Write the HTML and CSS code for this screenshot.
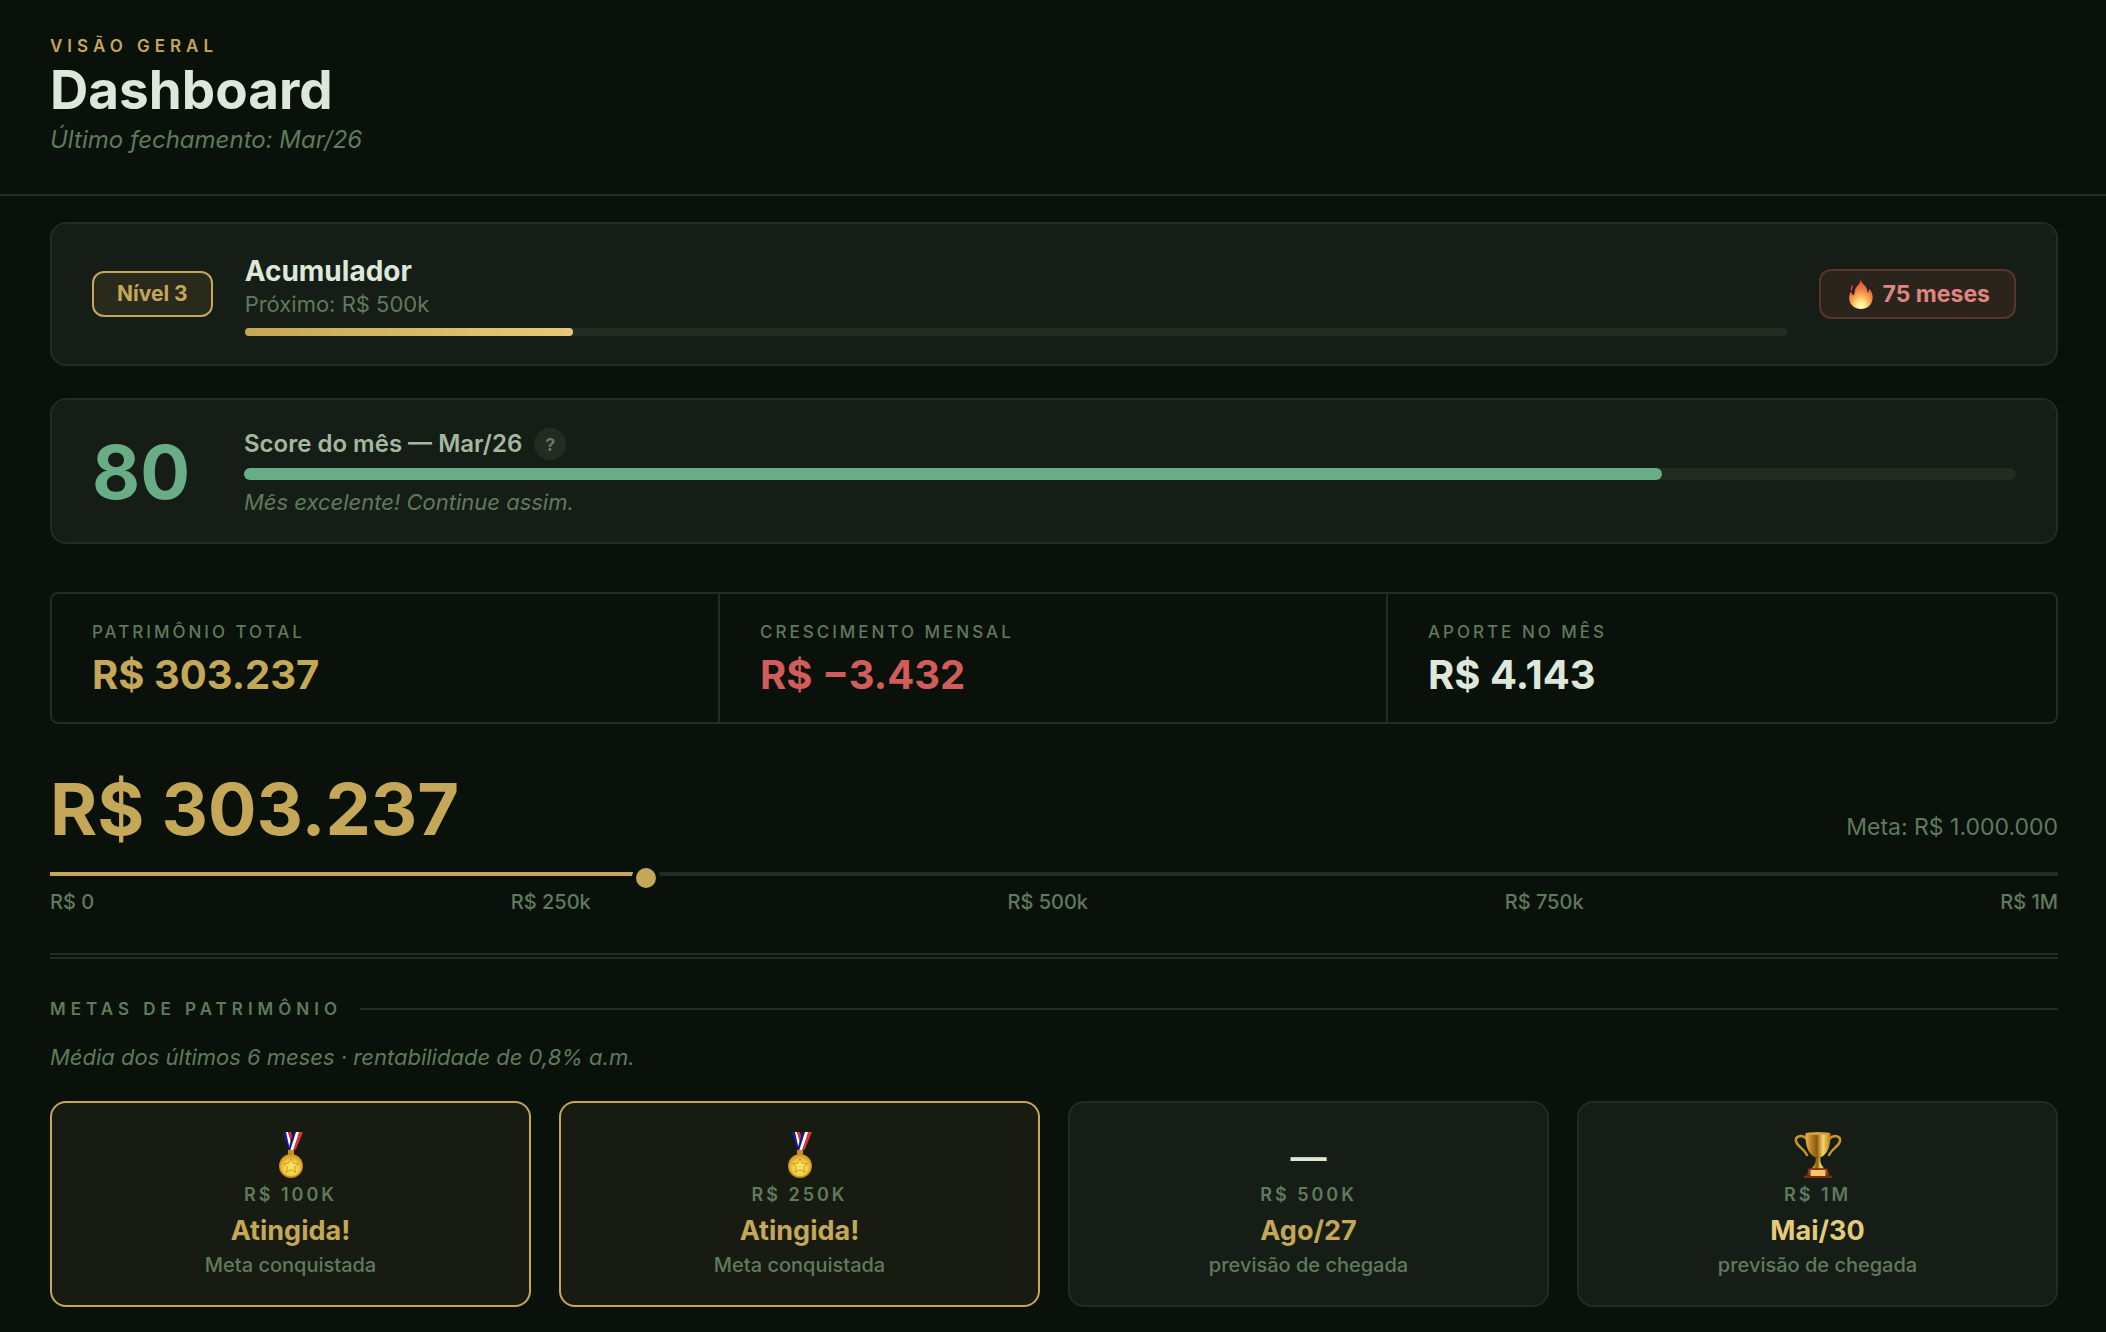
FILE: index.html
```html
<!DOCTYPE html>
<html lang="pt-BR">
<head>
  <meta charset="UTF-8">
  <meta name="viewport" content="width=device-width, initial-scale=1.0">
  <title>Dashboard</title>
  <link rel="stylesheet" href="styles.css">
</head>
<body>

  <!-- Degradês usados pelos ícones -->
  <svg class="defs" width="0" height="0" aria-hidden="true">
    <defs>
      <linearGradient id="ouro" x1="0" y1="0" x2="1" y2="0">
        <stop offset="0" stop-color="#e9b94a"/>
        <stop offset=".25" stop-color="#b57a1c"/>
        <stop offset=".45" stop-color="#8d5a12"/>
        <stop offset=".7" stop-color="#f7d56b"/>
        <stop offset="1" stop-color="#b87a1b"/>
      </linearGradient>
      <radialGradient id="moeda" cx=".5" cy=".6" r=".55">
        <stop offset="0" stop-color="#fff04f"/>
        <stop offset=".6" stop-color="#f2cf45"/>
        <stop offset="1" stop-color="#d99a22"/>
      </radialGradient>
      <radialGradient id="chama" cx=".5" cy=".92" r=".9">
        <stop offset="0" stop-color="#fffde0"/>
        <stop offset=".18" stop-color="#fff08a"/>
        <stop offset=".4" stop-color="#f9b65a"/>
        <stop offset=".65" stop-color="#f07a42"/>
        <stop offset="1" stop-color="#e2492f"/>
      </radialGradient>
      <symbol id="medalha" viewBox="0 0 48 48">
        <path d="M16 1h3l7 19h-4z" fill="#1a1f8f"/>
        <path d="M19 1h2l4 13-2 5z" fill="#fff"/>
        <path d="M21 1h3l2 8-1 5z" fill="#e0322f"/>
        <path d="M26 1h4l-5 19h-4z" fill="#151a80"/>
        <path d="M29 1h4l-7 19h-3z" fill="#fff"/>
        <path d="M32 1h4l-7 17-3 2z" fill="#e0322f"/>
        <path d="M21 19h6v6h-6z" fill="#c98c20"/>
        <circle cx="24" cy="35" r="12" fill="#c4871f"/>
        <circle cx="24" cy="34.500" r="11" fill="url(#moeda)"/>
        <path d="M24 27.500l2.200 4.700 5.200.5-3.900 3.500 1.200 5.100-4.700-2.600-4.700 2.600 1.200-5.100-3.900-3.500 5.200-.5z" fill="#f7e25a" stroke="#cf9a2a" stroke-width="1"/>
      </symbol>
      <symbol id="trofeu" viewBox="0 0 48 48">
        <path d="M13 8C8 3 1 5 2 10c1 6 7 6 11 14" fill="none" stroke="#c9952f" stroke-width="2.500" stroke-linecap="round"/>
        <path d="M35 8c5-5 12-3 11 2-1 6-7 6-11 14" fill="none" stroke="#c9952f" stroke-width="2.500" stroke-linecap="round"/>
        <path d="M11.500 2.500C11.500 14 13 22 21.500 26.500h5C35 22 36.500 14 36.500 2.500z" fill="url(#ouro)"/>
        <ellipse cx="24" cy="2.500" rx="12.500" ry="1.500" fill="#d9a23a"/>
        <path d="M21.500 26.500h5c-1 4 1 8 4 11h-13c3-3 5-7 4-11z" fill="url(#ouro)"/>
        <path d="M14.500 37.500h19l1.500 7h-22z" fill="#933612"/>
        <path d="M10 44.500h28v2.500H10z" fill="#7d2c10"/>
        <path d="M16.500 39h15v6h-15z" fill="#f3c768"/>
      </symbol>
      <symbol id="fogo" viewBox="0 0 24 30">
        <path d="M11.500 0c.5 5 7 6 7.200 14 1.200-1 1.400-3 1.200-4.500C22.500 12 24 15.500 23.600 19.500 23 26 18 30 12 30S.500 26 .200 19.500C0 16 1 14 2.200 12.500c.3 2 .8 3 2.300 3.800C6.500 14 5 11 7.500 8 9.500 5.500 11.500 4 11.500 0z" fill="url(#chama)"/>
        <path d="M3.500 6c1.200 2-1 3.500-.6 6-2-1.500-1.400-4 .6-6z" fill="#e2492f"/>
      </symbol>
    </defs>
  </svg>

  <header class="page-header">
    <div class="eyebrow">Visão geral</div>
    <h1>Dashboard</h1>
    <p class="subtitle">Último fechamento: Mar/26</p>
  </header>

  <main>
    <section class="card nivel">
      <span class="nivel-badge">Nível 3</span>
      <div class="nivel-info">
        <h2>Acumulador</h2>
        <p>Próximo: R$ 500k</p>
        <div class="bar"><div class="bar-fill" style="width: 21.3%"></div></div>
      </div>
      <span class="streak"><svg class="icon-fogo" aria-hidden="true"><use href="#fogo"/></svg>75 meses</span>
    </section>

    <section class="card score">
      <div class="score-num">80</div>
      <div class="score-info">
        <div class="score-title">
          <h2>Score do mês — Mar/26</h2>
          <button type="button" class="help" aria-label="Como o score é calculado">?</button>
        </div>
        <div class="bar bar-score"><div class="bar-fill" style="width: 80%"></div></div>
        <p>Mês excelente! Continue assim.</p>
      </div>
    </section>

    <section class="stats">
      <div class="stat">
        <div class="label">Patrimônio total</div>
        <div class="stat-value gold">R$ 303.237</div>
      </div>
      <div class="stat">
        <div class="label">Crescimento mensal</div>
        <div class="stat-value red">R$ −3.432</div>
      </div>
      <div class="stat">
        <div class="label">Aporte no mês</div>
        <div class="stat-value">R$ 4.143</div>
      </div>
    </section>

    <section class="progresso">
      <div class="progresso-top">
        <div class="total">R$ 303.237</div>
        <div class="meta">Meta: R$ 1.000.000</div>
      </div>
      <div class="track">
        <div class="track-fill" style="width: 29.7%"></div>
        <div class="track-dot" style="left: 29.7%"></div>
      </div>
      <div class="ticks">
        <span>R$ 0</span>
        <span>R$ 250k</span>
        <span>R$ 500k</span>
        <span>R$ 750k</span>
        <span>R$ 1M</span>
      </div>
    </section>

    <hr>

    <h2 class="section-title">Metas de patrimônio</h2>
    <p class="nota">Média dos últimos 6 meses · rentabilidade de 0,8% a.m.</p>

    <section class="metas">
      <article class="meta-card done">
        <div class="meta-icon"><svg aria-hidden="true"><use href="#medalha"/></svg></div>
        <div class="meta-valor">R$ 100k</div>
        <div class="meta-data">Atingida!</div>
        <div class="meta-desc">Meta conquistada</div>
      </article>
      <article class="meta-card done">
        <div class="meta-icon"><svg aria-hidden="true"><use href="#medalha"/></svg></div>
        <div class="meta-valor">R$ 250k</div>
        <div class="meta-data">Atingida!</div>
        <div class="meta-desc">Meta conquistada</div>
      </article>
      <article class="meta-card">
        <div class="meta-icon">—</div>
        <div class="meta-valor">R$ 500k</div>
        <div class="meta-data">Ago/27</div>
        <div class="meta-desc">previsão de chegada</div>
      </article>
      <article class="meta-card final">
        <div class="meta-icon"><svg aria-hidden="true"><use href="#trofeu"/></svg></div>
        <div class="meta-valor">R$ 1M</div>
        <div class="meta-data">Mai/30</div>
        <div class="meta-desc">previsão de chegada</div>
      </article>
    </section>
  </main>

</body>
</html>
```

FILE: styles.css
```css
:root {
  --bg: #0a110b;
  --card: #161d16;
  --line: #222c20;
  --text: #dde8da;
  --text-2: #a3b89f;
  --muted: #5f7a5c;
  --gold: #c4a857;
  --gold-light: #e4cb7a;
  --green: #68ad85;
  --red: #d15c5a;
}

* {
  box-sizing: border-box;
}

body {
  margin: 0;
  background: var(--bg);
  color: var(--text);
  font-family: 'Inter', sans-serif;
  font-size: 22px;
  line-height: 28px;
}

h1, h2, p {
  margin: 0;
}

.defs {
  position: absolute;
}

/* Cabeçalho */
.page-header {
  padding: 34px 48px 38px 50px;
  border-bottom: 2px solid var(--line);
}

.eyebrow {
  font-size: 17px;
  font-weight: 600;
  line-height: 24px;
  letter-spacing: 5px;
  text-transform: uppercase;
  color: var(--gold);
}

h1 {
  margin-top: 4px;
  font-size: 53px;
  font-weight: 700;
  line-height: 56px;
}

.subtitle {
  margin-top: 6px;
  font-size: 24px;
  font-style: italic;
  line-height: 32px;
  color: var(--muted);
}

main {
  padding: 26px 48px 24px 50px;
}

/* Cards de nível e score */
.card {
  display: flex;
  align-items: center;
  gap: 32px;
  padding: 28px 40px;
  margin-bottom: 32px;
  background: var(--card);
  border: 2px solid var(--line);
  border-radius: 16px;
}

.card p {
  color: var(--muted);
}

.nivel-badge {
  padding: 0 23px;
  border: 2px solid var(--gold);
  border-radius: 12px;
  background: #29291c;
  color: var(--gold);
  font-size: 21px;
  font-weight: 700;
  line-height: 42px;
}

.nivel-info, .score-info {
  flex: 1;
}

.nivel-info h2 {
  font-size: 28px;
  line-height: 38px;
}

.bar {
  height: 8px;
  margin-top: 10px;
  border-radius: 4px;
  background: var(--line);
}

.bar-fill {
  height: 100%;
  border-radius: inherit;
  background: linear-gradient(90deg, var(--gold), var(--gold-light));
}

.streak {
  display: flex;
  align-items: center;
  gap: 10px;
  padding: 0 24px 0 28px;
  border: 2px solid #59332d;
  border-radius: 12px;
  background: #2a241d;
  color: #e08580;
  font-size: 23px;
  font-weight: 700;
  line-height: 46px;
}

.icon-fogo {
  width: 24px;
  height: 30px;
}

.score {
  padding: 28px 40px 26px;
  margin-bottom: 48px;
}

.score-num {
  width: 120px;
  font-size: 74px;
  font-weight: 700;
  line-height: 80px;
  color: var(--green);
}

.score-title {
  display: flex;
  align-items: center;
  gap: 12px;
}

.score-title h2 {
  font-size: 24px;
  font-weight: 600;
  line-height: 32px;
  color: var(--text-2);
}

.help {
  width: 32px;
  height: 32px;
  padding: 0;
  border: none;
  border-radius: 50%;
  background: var(--line);
  color: var(--muted);
  font-family: inherit;
  font-size: 18px;
  font-weight: 700;
  cursor: pointer;
}

.bar-score {
  height: 12px;
  margin: 8px 0;
  border-radius: 6px;
}

.bar-score .bar-fill {
  background: var(--green);
}

.score p {
  font-style: italic;
}

/* Indicadores */
.stats {
  display: grid;
  grid-template-columns: repeat(3, 1fr);
  margin-bottom: 46px;
  border: 2px solid var(--line);
  border-radius: 8px;
}

.stat {
  padding: 26px 40px 20px;
  border-right: 2px solid var(--line);
}

.stat:last-child {
  border-right: none;
}

.label {
  font-size: 17px;
  font-weight: 500;
  line-height: 24px;
  letter-spacing: 3px;
  text-transform: uppercase;
  color: var(--muted);
}

.stat-value {
  margin-top: 4px;
  font-size: 40px;
  font-weight: 700;
  line-height: 54px;
}

.gold {
  color: var(--gold);
}

.red {
  color: var(--red);
}

/* Progresso até a meta */
.progresso-top {
  display: flex;
  align-items: baseline;
  justify-content: space-between;
}

.total {
  font-size: 72px;
  font-weight: 700;
  line-height: 78px;
  color: var(--gold);
}

.meta {
  font-size: 23px;
  color: var(--muted);
}

.track {
  position: relative;
  height: 4px;
  margin-top: 24px;
  background: var(--line);
}

.track-fill {
  height: 100%;
  background: var(--gold);
}

.track-dot {
  position: absolute;
  top: -8px;
  width: 28px;
  height: 28px;
  margin-left: -14px;
  border: 4px solid var(--bg);
  border-radius: 50%;
  background: var(--gold);
}

.ticks {
  display: flex;
  justify-content: space-between;
  margin-top: 12px;
  font-size: 20px;
  font-weight: 500;
  color: var(--muted);
}

hr {
  margin: 37px 0 38px;
  border: none;
  border-top: 6px double var(--line);
}

/* Metas */
.section-title {
  display: flex;
  align-items: center;
  gap: 18px;
  font-size: 17px;
  font-weight: 600;
  line-height: 24px;
  letter-spacing: 5px;
  text-transform: uppercase;
  color: var(--muted);
}

.section-title::after {
  content: "";
  flex: 1;
  height: 2px;
  background: var(--line);
}

.nota {
  margin: 22px 0 30px;
  font-style: italic;
  color: var(--muted);
}

.metas {
  display: grid;
  grid-template-columns: repeat(4, 1fr);
  gap: 28px;
}

.meta-card {
  padding: 28px 24px 26px;
  border: 2px solid var(--line);
  border-radius: 16px;
  background: var(--card);
  text-align: center;
}

.meta-card.done {
  border-color: var(--gold);
  background: #181b12;
}

.meta-icon {
  height: 48px;
  font-size: 36px;
  font-weight: 600;
  line-height: 52px;
}

.meta-icon svg {
  display: block;
  width: 48px;
  height: 48px;
  margin: 0 auto;
}

.meta-valor {
  margin-top: 3px;
  font-size: 18px;
  font-weight: 600;
  line-height: 26px;
  letter-spacing: 3px;
  text-transform: uppercase;
  color: var(--muted);
}

.meta-data {
  margin-top: 5px;
  font-size: 27px;
  font-weight: 700;
  line-height: 36px;
  color: var(--gold);
}

.final .meta-data {
  color: var(--gold-light);
}

.meta-desc {
  margin-top: 2px;
  font-size: 20px;
  font-weight: 500;
  color: var(--muted);
}
```
